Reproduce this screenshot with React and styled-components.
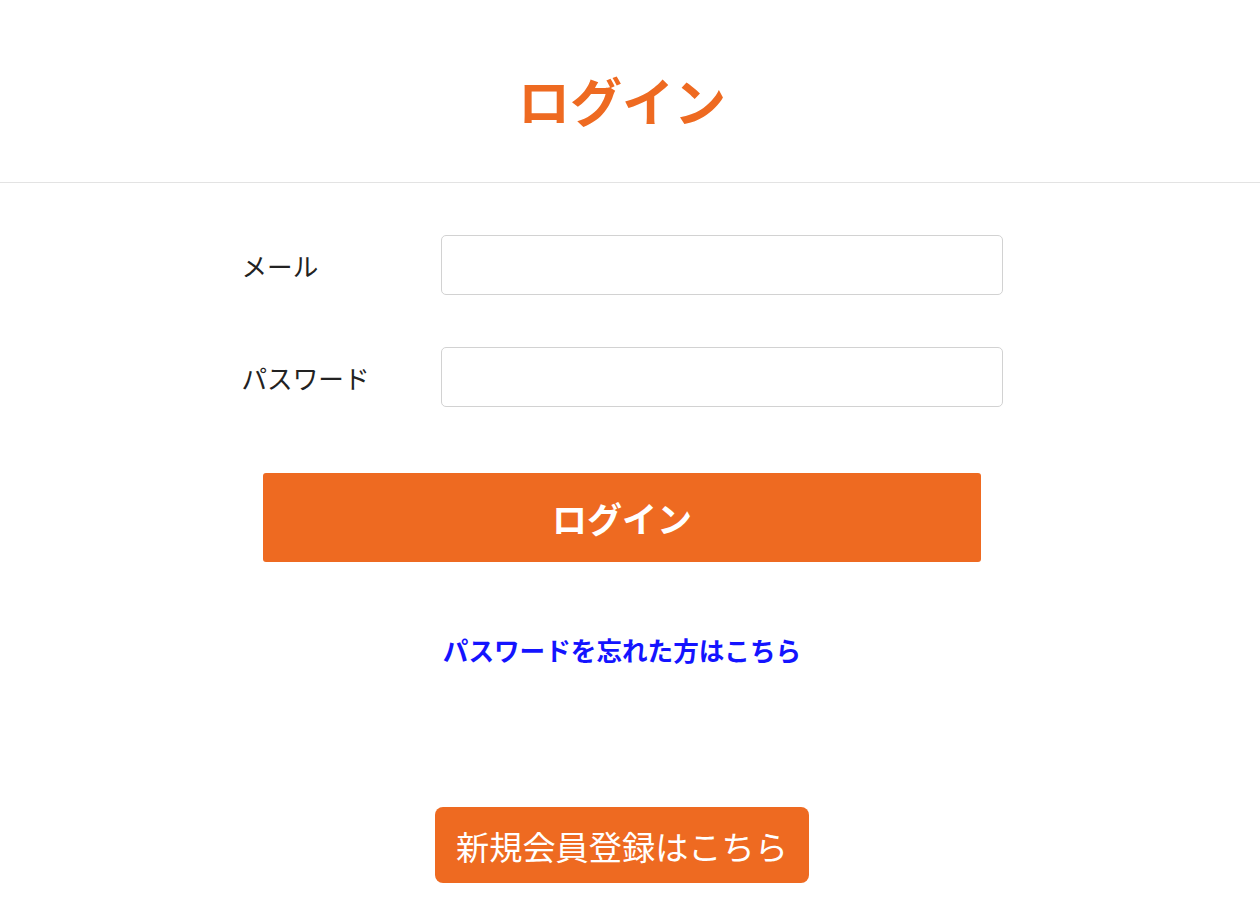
import styled, { createGlobalStyle } from "styled-components";

const GlobalStyle = createGlobalStyle`
  html, body {
    margin: 0;
    padding: 0;
    background: #fff;
    font-family: "Noto Sans CJK JP", "Noto Sans", sans-serif;
    color: #222;
  }
  * { box-sizing: border-box; }
`;

function App() {
    return (
        <>
            <GlobalStyle />
            <StPage>
                <StHeader>
                    <StTitle>ログイン</StTitle>
                </StHeader>
                <StMain>
                    <StForm onSubmit={(e) => e.preventDefault()}>
                        <StRow>
                            <StLabel htmlFor="mail">メール</StLabel>
                            <StInput id="mail" type="email" />
                        </StRow>
                        <StRow>
                            <StLabel htmlFor="password">パスワード</StLabel>
                            <StInput id="password" type="password" />
                        </StRow>
                        <StLoginButton type="submit">ログイン</StLoginButton>
                    </StForm>
                    <StForgotLink href="#">パスワードを忘れた方はこちら</StForgotLink>
                    <StRegisterButton type="button">新規会員登録はこちら</StRegisterButton>
                </StMain>
            </StPage>
        </>
    );
}

const StPage = styled.div`
  width: 100%;
  min-height: 904px;
`;

const StHeader = styled.header`
  height: 183px;
  padding: 74px 16px 0 0;
  border-bottom: 1px solid #e3e3e3;
  display: flex;
  justify-content: center;
  align-items: flex-start;
`;

const StTitle = styled.h1`
  margin: 0;
  font-size: 52px;
  line-height: 52px;
  font-weight: 700;
  color: #ee6a21;
`;

const StMain = styled.main`
  padding-right: 16px;
  display: flex;
  flex-direction: column;
  align-items: center;
`;

const StForm = styled.form`
  width: 761px;
  margin-top: 52px;
  display: flex;
  flex-direction: column;
  align-items: center;
  gap: 52px;
`;

const StRow = styled.div`
  width: 100%;
  display: flex;
  align-items: center;
`;

const StLabel = styled.label`
  width: 199px;
  font-size: 25.6px;
  color: #222;
`;

const StInput = styled.input`
  width: 562px;
  height: 60px;
  border: 1px solid #d2d2d2;
  border-radius: 5px;
  padding: 0 14px;
  font-size: 20px;
  outline: none;
`;

const StLoginButton = styled.button`
  width: 718px;
  height: 89px;
  margin-top: 14px;
  border: none;
  border-radius: 3px;
  background: #ee6a21;
  color: #fff;
  font-family: inherit;
  font-size: 35px;
  font-weight: 700;
  cursor: pointer;
`;

const StForgotLink = styled.a`
  margin-top: 75px;
  font-size: 25.6px;
  line-height: 25px;
  font-weight: 700;
  color: #1414ff;
  text-decoration: none;
`;

const StRegisterButton = styled.button`
  margin-top: 145px;
  height: 76px;
  padding: 0 21px;
  border: none;
  border-radius: 8px;
  background: #ee6a21;
  color: #fff;
  font-family: inherit;
  font-size: 33.2px;
  cursor: pointer;
`;

export default App;
